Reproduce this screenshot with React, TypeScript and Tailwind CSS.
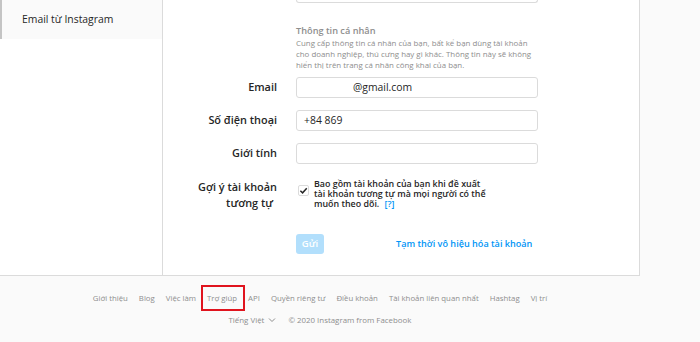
import React from "react";

const font = "font-['Open_Sans',sans-serif]";

export default function App() {
  const links = [
    "Giới thiệu",
    "Blog",
    "Việc làm",
    "Trợ giúp",
    "API",
    "Quyền riêng tư",
    "Điều khoản",
    "Tài khoản liên quan nhất",
    "Hashtag",
    "Vị trí",
  ];
  return (
    <div className={`w-[700px] h-[342px] bg-[#fafafa] overflow-hidden ${font}`}>
      <div className="w-[640px]">
        <div className="h-[276px] bg-white border-r border-b border-[#dbdbdb] flex">
          <aside className="w-[163px] shrink-0 border-r border-[#dbdbdb]">
            <div className="h-[39px] bg-[#fafafa] border-l-2 border-[#c4c4c4] flex items-center pl-[20px] text-[10.4px] text-[#262626]">
              Email từ Instagram
            </div>
          </aside>
          <main className="flex-1 flex flex-col">
            <div className="ml-[133px] w-[242px] h-[3px] border-x border-b border-[#dbdbdb] rounded-b-[3px]" />
            <div className="ml-[133px] mt-[21px] text-[9.2px] leading-[14px] font-semibold text-[#8e8e8e]">
              Thông tin cá nhân
            </div>
            <div className="ml-[133px] text-[7.9px] leading-[11px] text-[#8e8e8e] whitespace-nowrap">
              <div>Cung cấp thông tin cá nhân của bạn, bất kể bạn dùng tài khoản</div>
              <div>cho doanh nghiệp, thú cưng hay gì khác. Thông tin này sẽ không</div>
              <div>hiển thị trên trang cá nhân công khai của bạn.</div>
            </div>
            <Row label="Email" mt="mt-[6px]">
              <div className="w-[242px] h-[21px] border border-[#dbdbdb] rounded-[3px] flex items-center pl-[56px] text-[10.4px] text-[#262626]">
                @gmail.com
              </div>
            </Row>
            <Row label="Số điện thoại" mt="mt-[12px]">
              <div className="w-[242px] h-[21px] border border-[#dbdbdb] rounded-[3px] flex items-center pl-[7px] text-[10.4px] text-[#262626]">
                +84 869
              </div>
            </Row>
            <Row label="Giới tính" mt="mt-[12px]">
              <div className="w-[242px] h-[21px] border border-[#dbdbdb] rounded-[3px]" />
            </Row>
            <div className="flex mt-[15px]">
              <div className="w-[114px] text-right text-[10.9px] leading-[16px] font-semibold text-[#262626]">
                <div>Gợi ý tài khoản</div>
                <div className="pr-[4px]">tương tự</div>
              </div>
              <div className="ml-[21px] flex">
                <div className="mt-[6px] w-[11px] h-[11px] border border-[#dbdbdb] rounded-[2px] flex items-center justify-center bg-white">
                  <svg width="9" height="9" viewBox="0 0 10 10">
                    <path d="M1.5 5.2 L4 7.6 L8.6 2.4" fill="none" stroke="#262626" strokeWidth="1.6" />
                  </svg>
                </div>
                <div className="ml-[5px] text-[8.9px] leading-[10px] font-semibold text-[#262626] whitespace-nowrap">
                  <div>Bao gồm tài khoản của bạn khi đề xuất</div>
                  <div>tài khoản tương tự mà mọi người có thể</div>
                  <div>
                    muốn theo dõi. <span className="text-[#0095f6] ml-[3px]">[?]</span>
                  </div>
                </div>
              </div>
            </div>
            <div className="flex items-center mt-[23px] ml-[133px]">
              <div className="w-[28px] h-[20px] rounded-[3px] bg-[#b2dffc] text-white text-[9.5px] font-semibold flex items-center justify-center">
                Gửi
              </div>
              <div className="ml-[72px] text-[9.1px] font-semibold text-[#0095f6]">
                Tạm thời vô hiệu hóa tài khoản
              </div>
            </div>
          </main>
        </div>
        <div className="mt-[15px] flex justify-center gap-[11px] text-[7.8px] leading-[14px] text-[#8e8e8e]">
          {links.map((l) => (
            <span key={l} className="relative whitespace-nowrap">
              {l}
              {l === "Trợ giúp" && (
                <span className="absolute left-[-6px] right-[-8px] top-[-6px] bottom-[-6px] border-2 border-[#e0141e]" />
              )}
            </span>
          ))}
        </div>
        <div className="mt-[8px] flex justify-center items-center text-[7.9px] leading-[14px] text-[#8e8e8e]">
          <span>Tiếng Việt</span>
          <svg className="ml-[4px]" width="8" height="6" viewBox="0 0 8 6">
            <path d="M1 1.5 L4 4.5 L7 1.5" fill="none" stroke="#8e8e8e" strokeWidth="1" />
          </svg>
          <span className="ml-[12px]">© 2020 Instagram from Facebook</span>
        </div>
      </div>
    </div>
  );
}

function Row({ label, mt, children }: { label: string; mt: string; children: React.ReactNode }) {
  return (
    <div className={`flex items-center ${mt}`}>
      <div className="w-[114px] text-right text-[10.9px] font-semibold text-[#262626]">{label}</div>
      <div className="ml-[19px]">{children}</div>
    </div>
  );
}
